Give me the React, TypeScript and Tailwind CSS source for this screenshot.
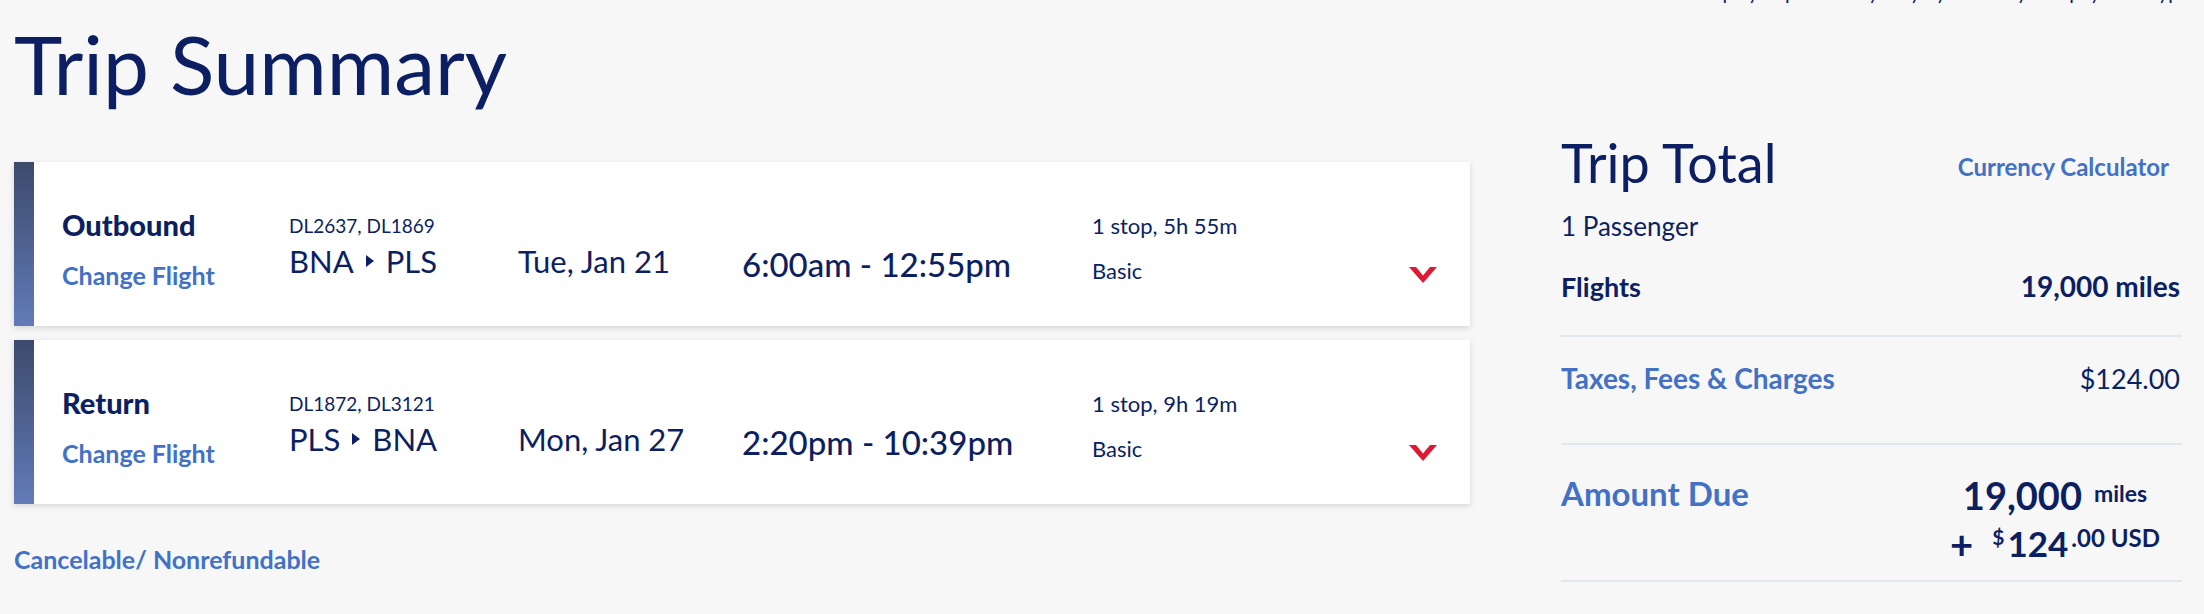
const navy = 'text-[#0c1f63]';

function RouteArrow() {
  return (
    <svg width="8" height="12" viewBox="0 0 8 12" className="mx-[12px] mt-[12px] shrink-0">
      <polygon points="0,0 8,6 0,12" fill="#0c1f63" />
    </svg>
  );
}

function Chevron() {
  return (
    <svg width="28" height="16" viewBox="0 0 28 16">
      <polygon points="0,0 7,0 14,8.5 21,0 28,0 14,16" fill="#e01933" />
    </svg>
  );
}

type Leg = {
  label: string;
  flights: string;
  from: string;
  to: string;
  date: string;
  time: string;
  stops: string;
};

const legs: Leg[] = [
  {
    label: 'Outbound',
    flights: 'DL2637, DL1869',
    from: 'BNA',
    to: 'PLS',
    date: 'Tue, Jan 21',
    time: '6:00am - 12:55pm',
    stops: '1 stop, 5h 55m',
  },
  {
    label: 'Return',
    flights: 'DL1872, DL3121',
    from: 'PLS',
    to: 'BNA',
    date: 'Mon, Jan 27',
    time: '2:20pm - 10:39pm',
    stops: '1 stop, 9h 19m',
  },
];

function LegCard({ leg }: { leg: Leg }) {
  return (
    <div className="flex h-[164px] bg-white shadow-[0_2px_6px_rgba(0,0,0,0.14)]">
      <div className="w-[20px] shrink-0 bg-gradient-to-b from-[#3c4a6c] to-[#627bb8]" />
      <div className={`flex flex-1 pl-[28px] ${navy}`}>
        <div className="w-[227px] shrink-0 pt-[46px]">
          <div className="text-[29px] leading-[34px] font-black">{leg.label}</div>
          <div className="mt-[18px] text-[25px] leading-[30px] font-bold text-[#4271c6]">Change Flight</div>
        </div>
        <div className="w-[229px] shrink-0 pt-[52px]">
          <div className="text-[19px] leading-[24px]">{leg.flights}</div>
          <div className="mt-[5px] flex text-[31px] leading-[36px]">
            <span>{leg.from}</span>
            <RouteArrow />
            <span>{leg.to}</span>
          </div>
        </div>
        <div className="w-[224px] shrink-0 pt-[81px] text-[31px] leading-[36px]">{leg.date}</div>
        <div className="w-[350px] shrink-0 pt-[82px] text-[33px] leading-[40px] font-medium">{leg.time}</div>
        <div className="flex-1 pt-[50px] text-[22px] leading-[28px]">
          <div>{leg.stops}</div>
          <div className="mt-[17px]">Basic</div>
        </div>
        <div className="pt-[105px] pr-[33px]">
          <Chevron />
        </div>
      </div>
    </div>
  );
}

export default function App() {
  return (
    <div className={`min-h-screen bg-[#f7f7f7] font-['Lato',sans-serif] ${navy}`}>
      <div className="flex h-[6px] justify-end overflow-hidden pr-[14px]">
        <p className="mt-[-18px] text-[20px] leading-[20px]">
          Displayed prices may vary by currency and payment type
        </p>
      </div>

      <div className="flex items-start pl-[14px]">
        <div className="w-[1456px] shrink-0">
          <h1 className="mt-[16px] text-[82px] leading-[82px] font-normal">Trip Summary</h1>

          <div className="mt-[58px] flex flex-col gap-[14px]">
            {legs.map((leg) => (
              <LegCard key={leg.label} leg={leg} />
            ))}
          </div>

          <div className="mt-[40px] text-[25px] leading-[30px] font-bold text-[#4271c6]">
            Cancelable/ Nonrefundable
          </div>
        </div>

        <div className="ml-[91px] w-[621px] shrink-0 pt-[126px]">
          <div className="flex items-start justify-between">
            <h2 className="text-[54px] leading-[62px] font-normal">Trip Total</h2>
            <a className="mt-[20px] pr-[13px] text-[24px] leading-[30px] font-bold text-[#4271c6]">
              Currency Calculator
            </a>
          </div>
          <div className="mt-[16px] text-[26px] leading-[32px]">1 Passenger</div>

          <div className="mt-[27px] flex items-baseline justify-between pr-[2px] text-[27px] leading-[34px] font-bold">
            <span>Flights</span>
            <span className="text-[28px]">19,000 miles</span>
          </div>

          <div className="mt-[31px] h-[2px] bg-[#e1e7f1]" />

          <div className="mt-[24px] flex items-baseline justify-between pr-[2px] text-[28px] leading-[34px]">
            <span className="font-bold text-[#4271c6]">Taxes, Fees &amp; Charges</span>
            <span className="text-[27px]">$124.00</span>
          </div>

          <div className="mt-[47px] h-[2px] bg-[#e1e7f1]" />

          <div className="mt-[28px] flex items-start justify-between">
            <span className="text-[33px] leading-[40px] font-bold text-[#4271c6]">Amount Due</span>
            <div className="flex w-[254px] flex-col items-center font-bold">
              <div className="flex items-start">
                <span className="text-[38px] leading-[44px]">19,000</span>
                <span className="ml-[12px] mt-[6px] text-[23px] leading-[28px]">miles</span>
              </div>
              <div className="mt-[6px] flex items-start">
                <span className="mt-[1px] text-[40px] leading-[40px]">+</span>
                <span className="ml-[19px] mt-[2px] text-[21px] leading-[24px]">$</span>
                <span className="ml-[3px] text-[35px] leading-[40px]">124</span>
                <span className="ml-[3px] text-[24px] leading-[30px]">.00 USD</span>
              </div>
            </div>
          </div>

          <div className="mt-[16px] h-[2px] bg-[#e1e7f1]" />
        </div>
      </div>
    </div>
  );
}
